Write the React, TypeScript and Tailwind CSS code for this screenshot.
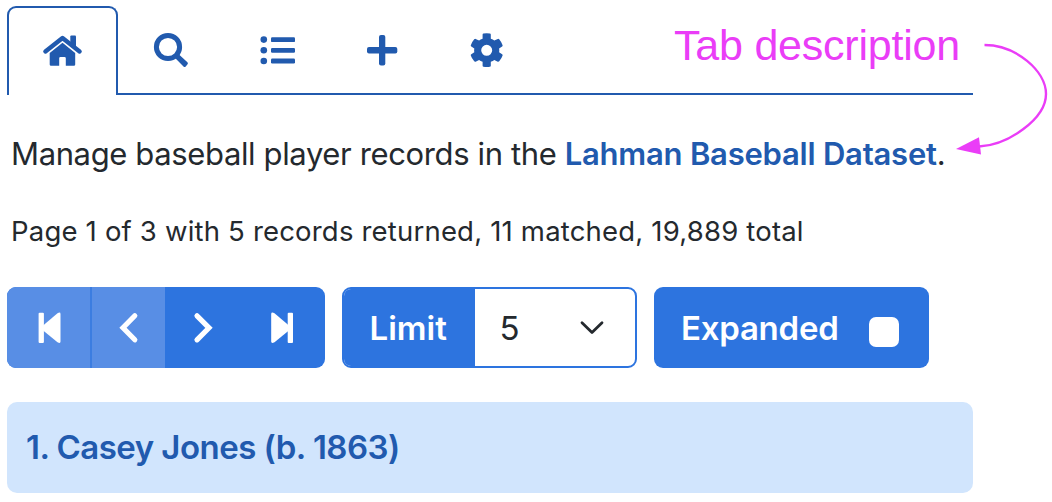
import type { ReactNode } from "react";

function Icon({ box, w, h, children }: { box: string; w: number; h: number; children: ReactNode }) {
  return (
    <svg viewBox={box} width={w} height={h} fill="currentColor" className="block shrink-0">
      {children}
    </svg>
  );
}

function Tabs() {
  return (
    <nav className="flex h-[89px] w-[966px] text-[#215aae]">
      <button className="flex w-[111px] items-center justify-center rounded-t-[9px] border-2 border-b-0 border-[#215aae]">
        <Icon box="42 31.5 41 40" w={41} h={40}>
          <path d="M45.4 51L62.5 37.6L79.6 51" fill="none" stroke="currentColor" strokeWidth="4.4" strokeLinecap="round" strokeLinejoin="round" />
          <path d="M70.3 42V36Q70.3 35 71.3 35H75Q76 35 76 36V46.5Z" />
          <path d="M62.5 42.3L75.2 52.4V64Q75.2 65.3 73.9 65.3H65.8V57.8Q65.8 56.5 64.5 56.5H60.5Q59.2 56.5 59.2 57.8V65.3H51Q49.7 65.3 49.7 64V52.4Z" />
        </Icon>
      </button>
      <div className="flex flex-1 items-center border-b-2 border-[#215aae]">
        <button className="flex w-[106px] justify-center">
          <Icon box="151 30 40 40" w={40} h={40}>
            <circle cx="168" cy="47" r="11.6" fill="none" stroke="currentColor" strokeWidth="5" />
            <path d="M176.5 55.5L179 54.4L187.4 62.2Q188.5 63.3 187.4 64.4L185.7 66.4Q184.6 67.5 183.5 66.4L175.6 58.5Z" />
          </Icon>
        </button>
        <button className="flex w-[108px] justify-center">
          <Icon box="258 30 40 40" w={40} h={40}>
            <circle cx="263.8" cy="39.6" r="3.3" />
            <circle cx="263.8" cy="50.3" r="3.3" />
            <circle cx="263.8" cy="61" r="3.3" />
            <rect x="271" y="37.3" width="24" height="4.8" rx="1.2" />
            <rect x="271" y="47.9" width="24" height="4.8" rx="1.2" />
            <rect x="271" y="58.6" width="24" height="4.8" rx="1.2" />
          </Icon>
        </button>
        <button className="flex w-[100px] justify-center">
          <Icon box="362 30 40 40" w={40} h={40}>
            <rect x="379" y="35" width="6.3" height="30.5" rx="2" />
            <rect x="367" y="47" width="30.3" height="6.6" rx="2" />
          </Icon>
        </button>
        <button className="flex w-[109px] justify-center">
          <Icon box="467 30 40 40" w={40} h={40}>
            <path
              fillRule="evenodd"
              d="M482.6 34.6Q482.7 33.8 483.5 33.6Q486.6 33 489.9 33.6Q490.7 33.8 490.8 34.6V38.8Q493 39.6 494.3 40.6L497.8 38.9Q498.6 38.6 499.2 39.3Q501.6 42.2 502.6 45.2Q502.8 46 502.1 46.4L499.1 48.4Q499.5 50.4 499.1 52.2L502.1 54.2Q502.8 54.6 502.6 55.4Q501.6 58.4 499.2 61.3Q498.6 62 497.8 61.7L494.3 60Q493 61 490.8 61.8V65.8Q490.7 66.6 489.9 66.8Q486.6 67.4 483.5 66.8Q482.7 66.6 482.6 65.8V61.8Q480.4 61 479.1 60L475.6 61.7Q474.8 62 474.2 61.3Q471.8 58.4 470.8 55.4Q470.6 54.6 471.3 54.2L474.3 52.2Q473.9 50.4 474.3 48.4L471.3 46.4Q470.6 46 470.8 45.2Q471.8 42.2 474.2 39.3Q474.8 38.6 475.6 38.9L479.1 40.6Q480.4 39.6 482.6 38.8ZM481.2 50.3A5.5 5.5 0 1 0 492.2 50.3A5.5 5.5 0 1 0 481.2 50.3Z"
            />
          </Icon>
        </button>
      </div>
    </nav>
  );
}

function Pager() {
  return (
    <div className="flex h-[81px] w-[317.5px] overflow-hidden rounded-[9px] bg-[#2d74df] text-white">
      <button className="flex w-[84px] items-center justify-center border-r border-[#3b7de1] bg-[#588ee5]">
        <Icon box="34 308 30 40" w={30} h={40}>
          <rect x="38.6" y="312.7" width="5.3" height="30.3" rx="1" />
          <path d="M42.5 326L57.5 313.2Q60.5 311.6 60.5 314V341.6Q60.5 344 57.5 342.3L42.5 330Z" />
        </Icon>
      </button>
      <button className="flex w-[74px] items-center justify-center border-l border-[#3b7de1] bg-[#588ee5]">
        <Icon box="113.5 308 30 40" w={30} h={40}>
          <path d="M134.3 315.8L122.5 327.8L134.3 339.8" fill="none" stroke="currentColor" strokeWidth="5.2" strokeLinecap="round" />
        </Icon>
      </button>
      <button className="flex w-[76px] items-center justify-center">
        <Icon box="188 308 30 40" w={30} h={40}>
          <path d="M197 315.8L209 327.8L197 339.8" fill="none" stroke="currentColor" strokeWidth="5.2" strokeLinecap="round" />
        </Icon>
      </button>
      <button className="flex flex-1 items-center justify-center">
        <Icon box="268 308 30 40" w={30} h={40}>
          <path d="M289.5 326L274.5 313.2Q271.2 311.6 271.2 314V341.6Q271.2 344 274.5 342.3L289.5 330Z" />
          <rect x="287.7" y="312.7" width="5.3" height="30.3" rx="1" />
        </Icon>
      </button>
    </div>
  );
}

export default function App() {
  return (
    <main className="relative h-[502px] w-[1052px] overflow-hidden bg-white pl-[7px] pt-[6px] font-['Inter','Liberation_Sans',sans-serif] text-[#24292e]">
      <Tabs />
      <p className="mt-[39px] ml-[4px] h-[40px] text-[31px] leading-[40px] tracking-[-0.37px] whitespace-nowrap">
        Manage baseball player records in the{" "}
        <a className="font-semibold tracking-[-0.23px] text-[#215aae]">Lahman Baseball Dataset</a>.
      </p>
      <p className="mt-[39px] ml-[4px] h-[36px] text-[27.5px] leading-[36px] tracking-[0.19px] whitespace-nowrap">
        Page 1 of 3 with 5 records returned, 11 matched, 19,889 total
      </p>
      <div className="mt-[38px] flex">
        <Pager />
        <div className="ml-[17px] flex h-[81px] w-[295px] overflow-hidden rounded-[9px] border-2 border-[#2d74df]">
          <span className="flex w-[131px] items-center bg-[#2d74df] pt-[2px] pl-[26px] text-[33px] font-semibold text-white">Limit</span>
          <button className="flex flex-1 items-center justify-between pr-[30px] pl-[25px] text-[33px]">
            <span className="pt-[2px]">5</span>
            <svg width="26" height="16" viewBox="0 0 26 16" fill="none" className="block">
              <path d="M3 2.7L13 12.5L23 2.7" stroke="#24292e" strokeWidth="2.8" strokeLinecap="round" strokeLinejoin="round" />
            </svg>
          </button>
        </div>
        <label className="ml-[17.5px] flex h-[81px] w-[275px] items-center justify-between rounded-[9px] bg-[#2d74df] pr-[30px] pl-[27px] text-[33px] font-semibold tracking-[-0.25px] text-white">
          <span className="pt-[2px]">Expanded</span>
          <span className="mt-[9px] size-[30px] rounded-[7px] bg-white" />
        </label>
      </div>
      <section className="mt-[34px] flex h-[91px] w-[966px] items-center rounded-[10px] bg-[#d1e5fd] pt-[1px] pl-[19px] text-[33px] font-semibold tracking-[-0.53px] text-[#215aae]">
        1. Casey Jones (b. 1863)
      </section>

      <div className="absolute top-[20px] left-[674px] font-['Liberation_Sans',Arial,sans-serif] text-[43px] leading-[50px] tracking-[-0.22px] whitespace-nowrap text-[#ea3df7]">
        Tab description
      </div>
      <svg className="absolute top-[30px] left-[950px]" width="102" height="130" viewBox="950 30 102 130">
        <path d="M984.5 45C1016 45 1046 71 1046 94C1046 119 1008 145 979 146.5" fill="none" stroke="#ea3df7" strokeWidth="2.4" />
        <path d="M956 149L979 137.2L981 154.5Z" fill="#ea3df7" />
      </svg>
    </main>
  );
}
